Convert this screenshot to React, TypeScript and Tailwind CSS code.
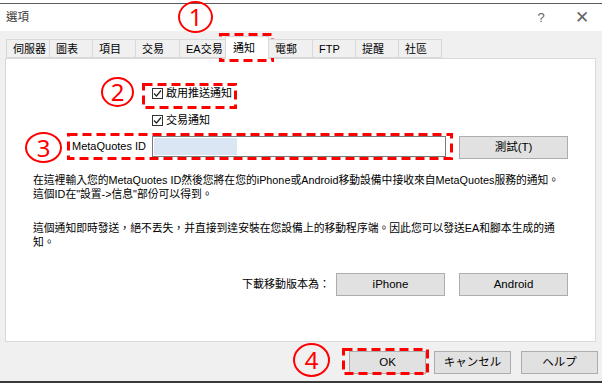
import React from 'react';

const font = { fontFamily: '"Liberation Sans", "Noto Sans CJK TC", sans-serif' };

const tabs: [string, number][] = [
  ['伺服器', 44],
  ['圖表', 44],
  ['項目', 44],
  ['交易', 45],
  ['EA交易', 47],
  ['通知', 44],
  ['電郵', 45],
  ['FTP', 44],
  ['提醒', 44],
  ['社區', 44],
];

const Check: React.FC = () => (
  <span className="w-[11px] h-[11px] border border-[#333] bg-white flex items-center justify-center">
    <svg width="9" height="9" viewBox="0 0 9 9">
      <path d="M1 4.5 L3.5 7 L8 1.5" fill="none" stroke="#222" strokeWidth="1.2" />
    </svg>
  </span>
);

const Btn: React.FC<{ label: string; className?: string }> = ({ label, className = '' }) => (
  <div className={`h-[23px] bg-[#e1e1e1] border border-[#adadad] flex items-center justify-center text-[11.5px] text-black whitespace-nowrap ${className}`}>
    {label}
  </div>
);

const Dashed: React.FC<{ x: number; y: number; w: number; h: number }> = ({ x, y, w, h }) => (
  <svg className="absolute pointer-events-none" style={{ left: x, top: y }} width={w} height={h}>
    <rect x="1.5" y="1.5" width={w - 3} height={h - 3} fill="none" stroke="#ff0000" strokeWidth="3" strokeDasharray="9 5" />
  </svg>
);

const Num: React.FC<{ x: number; y: number; w: number; h: number; n: string }> = ({ x, y, w, h, n }) => (
  <div
    className="absolute rounded-[50%] border-2 border-[#ff0000] flex items-center justify-center text-[#ff0000] text-[24px] leading-none"
    style={{ left: x, top: y, width: w, height: h, fontFamily: '"Noto Sans", sans-serif' }}
  >
    {n}
  </div>
);

export default function App() {
  return (
    <div className="w-[602px] h-[387px] bg-white relative overflow-hidden flex flex-col" style={font}>
      <div className="h-[3px] bg-white" />
      <div className="h-px bg-[#5c5c5c]" />
      <div className="h-[27px] bg-white flex items-center justify-between pl-[6px] text-[11.5px] text-[#333]">
        <span>選項</span>
        <div className="flex items-center text-[#666]">
          <span className="w-[12px] text-center text-[13px]">?</span>
          <span className="ml-[28px] mr-[13px] text-[17px] font-light">✕</span>
        </div>
      </div>

      <div className="h-[350px] bg-[#f0f0f0] pt-[5px] flex flex-col">
        <div className="h-[22px] ml-[7px] flex items-end relative z-10">
          {tabs.map(([t, w]) =>
            t === '通知' ? (
              <div
                key={t}
                style={{ width: w }}
                className="h-[23px] -mb-px -ml-px bg-white border border-b-0 border-[#d9d9d9] pl-[7px] pt-[3px] text-[11px] text-black whitespace-nowrap"
              >
                {t}
              </div>
            ) : (
              <div
                key={t}
                style={{ width: w }}
                className="h-[19px] bg-[#f0f0f0] border border-[#d9d9d9] -ml-px pl-[6px] text-[11px] text-black leading-[18px] whitespace-nowrap"
              >
                {t}
              </div>
            )
          )}
        </div>

        <div className="ml-[5px] w-[591px] h-[284px] border border-[#d9d9d9] bg-white px-[27px] pt-[26px] text-[11px] text-black">
          <div className="h-[16px] ml-[119px] flex items-center gap-[3px]">
            <Check />
            <span>啟用推送通知</span>
          </div>
          <div className="h-[16px] mt-[11px] ml-[119px] flex items-center gap-[3px]">
            <Check />
            <span>交易通知</span>
          </div>
          <div className="mt-[8px] flex items-start">
            <span className="ml-[39px] w-[80px] h-[21px] flex items-center whitespace-nowrap">MetaQuotes ID</span>
            <div className="w-[294px] h-[21px] border border-[#7a7a7a] bg-white p-px">
              <div className="w-[83px] h-full bg-[#dae6f3]" />
            </div>
            <Btn label="測試(T)" className="ml-[13px] w-[109px]" />
          </div>
          <p className="mt-[14px] text-[10.8px] leading-[14px] whitespace-nowrap">
            在這裡輸入您的MetaQuotes ID然後您將在您的iPhone或Android移動設備中接收來自MetaQuotes服務的通知。
            <br />
            這個ID在"設置-&gt;信息"部份可以得到。
          </p>
          <p className="mt-[20px] text-[10.8px] leading-[14px] whitespace-nowrap">
            這個通知即時發送，絕不丟失，并直接到達安裝在您設備上的移動程序端。因此您可以發送EA和腳本生成的通
            <br />
            知。
          </p>
          <div className="mt-[24px] flex items-center justify-end">
            <span className="mr-[6px]">下載移動版本為：</span>
            <Btn label="iPhone" className="w-[109px]" />
            <Btn label="Android" className="ml-[14px] w-[109px]" />
          </div>
        </div>

        <div className="mt-[9px] flex">
          <Btn label="OK" className="ml-[349px] w-[77px] h-[22px]" />
          <Btn label="キャンセル" className="ml-[8px] w-[77px] h-[22px]" />
          <Btn label="ヘルプ" className="ml-[10px] w-[77px] h-[22px]" />
        </div>
      </div>
      <div className="h-[2px] bg-[#3a3a3a]" />
      <div className="flex-1 bg-white" />

      <Num x={178} y={1} w={35} h={32} n="1" />
      <Dashed x={219} y={33} w={55} h={29} />
      <Num x={101} y={77} w={33} h={30} n="2" />
      <Dashed x={142} y={83} w={95} h={26} />
      <Num x={25} y={132} w={37} h={31} n="3" />
      <Dashed x={67} y={133} w={386} h={27} />
      <Num x={293} y={343} w={37} h={34} n="4" />
      <Dashed x={342} y={348} w={87} h={27} />
    </div>
  );
}
